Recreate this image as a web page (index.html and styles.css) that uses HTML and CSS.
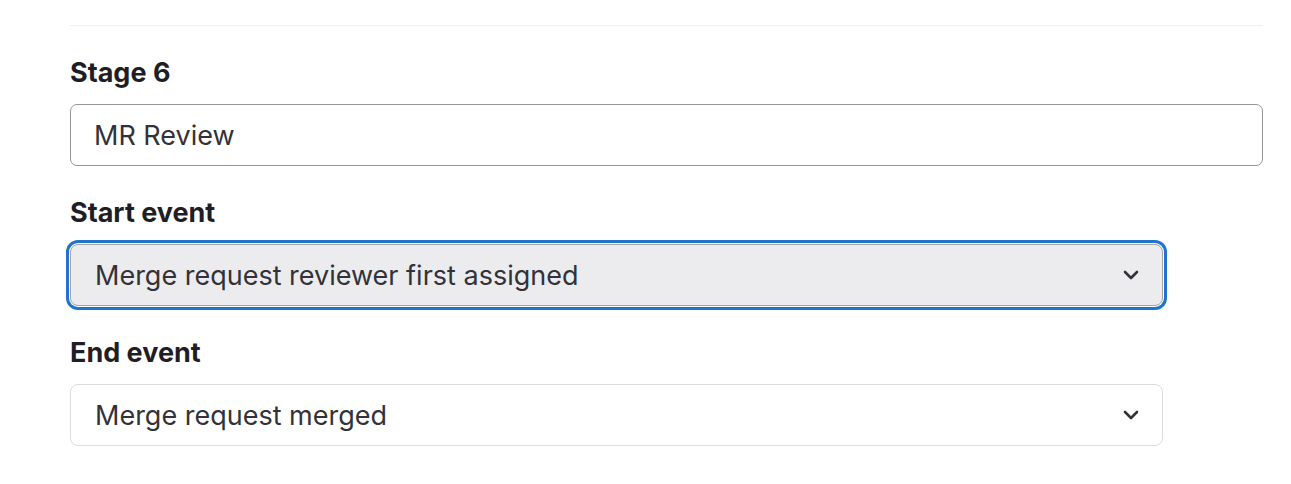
FILE: index.html
```html
<!DOCTYPE html>
<html lang="en">

<head>
    <meta charset="UTF-8">
    <title>Stage settings</title>
    <link rel="stylesheet" href="styles.css">
</head>

<body>
<div class="stage-form">
    <hr class="divider">
    <div class="field">
        <label class="field-label" for="stageName">Stage 6</label>
        <input type="text" id="stageName" class="text-input" value="MR Review">
    </div>
    <div class="field">
        <label class="field-label">Start event</label>
        <button class="select select-focused">
            <span>Merge request reviewer first assigned</span>
            <svg class="chevron" width="16" height="10" viewBox="0 0 16 10"><path d="M2 2l6 6 6-6" fill="none" stroke="#333238" stroke-width="2.6" stroke-linecap="round" stroke-linejoin="round"/></svg>
        </button>
    </div>
    <div class="field">
        <label class="field-label">End event</label>
        <button class="select">
            <span>Merge request merged</span>
            <svg class="chevron" width="16" height="10" viewBox="0 0 16 10"><path d="M2 2l6 6 6-6" fill="none" stroke="#333238" stroke-width="2.6" stroke-linecap="round" stroke-linejoin="round"/></svg>
        </button>
    </div>
</div>
</body>
</html>
```

FILE: styles.css
```css
* {
    box-sizing: border-box;
}

body {
    margin: 0;
    background-color: #fff;
    font-family: Inter, "Noto Sans", "Liberation Sans", sans-serif;
    color: #1f1e24;
}

.stage-form {
    width: 1263px;
    padding: 25px 0 0 70px;
}

.divider {
    margin: 0 0 31px;
    border: 0;
    border-top: 1px solid #efeff0;
}

.field {
    display: flex;
    flex-direction: column;
    margin-bottom: 31px;
}

.field-label {
    font-size: 27px;
    font-weight: 700;
    line-height: 32px;
    margin-bottom: 15px;
}

.text-input {
    height: 62px;
    width: 100%;
    padding: 0 23px;
    border: 1px solid #959499;
    border-radius: 7px;
    font-family: inherit;
    font-size: 27px;
    color: #333238;
    outline: none;
}

.select {
    display: flex;
    justify-content: space-between;
    align-items: center;
    width: 1093px;
    height: 62px;
    padding: 0 23px 0 24px;
    border: 1px solid #dcdcde;
    border-radius: 8px;
    background-color: #fff;
    font-family: inherit;
    font-size: 27px;
    color: #333238;
    text-align: left;
}

/*获得焦点时的状态*/
.select-focused {
    background-color: #ececef;
    border-color: #a4a3a8;
    box-shadow: 0 0 0 1px #fff, 0 0 0 4px #1f75cb;
}

.chevron {
    flex-shrink: 0;
}
```
